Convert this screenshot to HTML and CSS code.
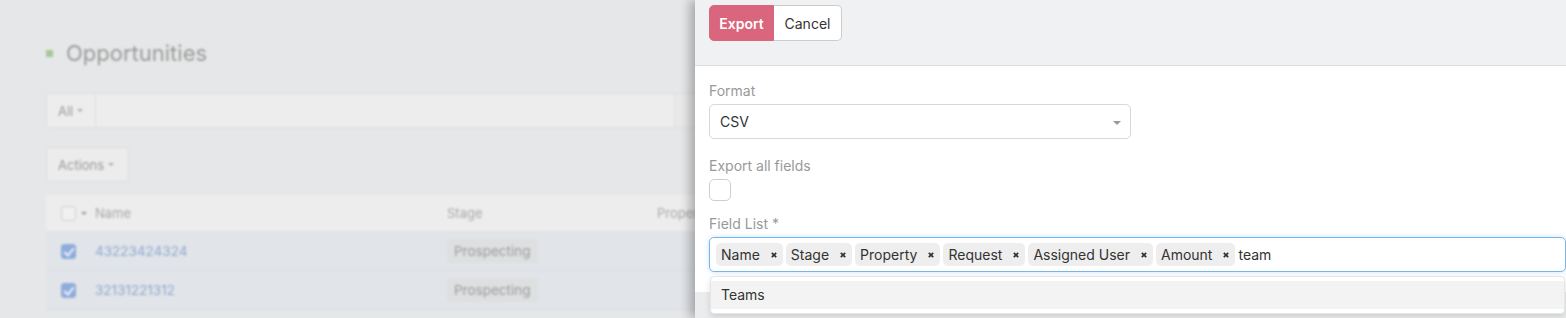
FILE: index.html
```html
<!DOCTYPE html>
<html>
<head>
<meta charset="utf-8">
<link rel="stylesheet" href="styles.css">
</head>
<body>
<div class="page">
  <div class="title"><span class="title-mark"></span>Opportunities</div>
  <div class="search">
    <div class="search-all">All<span class="caret"></span></div>
    <div class="search-input"></div>
    <div class="search-btn"></div>
  </div>
  <div class="actions">Actions<span class="caret"></span></div>
  <div class="table">
    <div class="row head">
      <div class="c-check"><span class="cb"></span><span class="caret dark"></span></div>
      <div class="c-name">Name</div>
      <div class="c-stage">Stage</div>
      <div class="c-prop">Property</div>
    </div>
    <div class="row sel">
      <div class="c-check"><span class="cb on"></span></div>
      <div class="c-name link">43223424324</div>
      <div class="c-stage"><span class="badge">Prospecting</span></div>
      <div class="c-prop"></div>
    </div>
    <div class="row sel">
      <div class="c-check"><span class="cb on"></span></div>
      <div class="c-name link">32131221312</div>
      <div class="c-stage"><span class="badge">Prospecting</span></div>
      <div class="c-prop"></div>
    </div>
  </div>
</div>

<div class="modal">
  <div class="modal-header">
    <div class="btn-group">
      <button class="btn btn-export">Export</button>
      <button class="btn btn-cancel">Cancel</button>
    </div>
  </div>
  <div class="modal-body">
    <div class="field">
      <div class="label">Format</div>
      <div class="select">CSV<span class="select-caret"></span></div>
    </div>
    <div class="field field-check">
      <div class="label">Export all fields</div>
      <div class="checkbox"></div>
    </div>
    <div class="field field-last">
      <div class="label">Field List *</div>
      <div class="multi">
        <span class="tag">Name<svg class="x" viewBox="0 0 6 6"><path d="M0.8 0.8L5.2 5.2M5.2 0.8L0.8 5.2"/></svg></span>
        <span class="tag">Stage<svg class="x" viewBox="0 0 6 6"><path d="M0.8 0.8L5.2 5.2M5.2 0.8L0.8 5.2"/></svg></span>
        <span class="tag">Property<svg class="x" viewBox="0 0 6 6"><path d="M0.8 0.8L5.2 5.2M5.2 0.8L0.8 5.2"/></svg></span>
        <span class="tag">Request<svg class="x" viewBox="0 0 6 6"><path d="M0.8 0.8L5.2 5.2M5.2 0.8L0.8 5.2"/></svg></span>
        <span class="tag">Assigned User<svg class="x" viewBox="0 0 6 6"><path d="M0.8 0.8L5.2 5.2M5.2 0.8L0.8 5.2"/></svg></span>
        <span class="tag">Amount<svg class="x" viewBox="0 0 6 6"><path d="M0.8 0.8L5.2 5.2M5.2 0.8L0.8 5.2"/></svg></span>
        <span class="typed">team</span>
        <div class="dropdown"><div class="option">Teams</div></div>
      </div>
    </div>
  </div>
</div>
</body>
</html>
```

FILE: styles.css
```css
html, body {
  margin: 0;
  padding: 0;
  width: 1566px;
  height: 318px;
  overflow: hidden;
  background: #e6e7e8;
  font-family: Inter, "Liberation Sans", sans-serif;
  font-size: 14px;
}

/* ---------- blurred background page ---------- */
.page {
  padding: 38px 0 0 46px;
  filter: blur(1.3px);
  color: #9a9a9a;
}
.title {
  display: flex;
  align-items: center;
  height: 30px;
  font-size: 22px;
  color: #9b9b9b;
}
.title-mark {
  width: 7px;
  height: 7px;
  background: #a9c79b;
  margin-right: 13px;
}
.caret {
  display: inline-block;
  width: 0;
  height: 0;
  border-left: 3px solid transparent;
  border-right: 3px solid transparent;
  border-top: 3px solid #aaa;
  margin-left: 4px;
  vertical-align: middle;
}
.caret.dark { border-top-color: #999; margin-left: 5px; }
.search {
  margin-top: 25px;
  display: flex;
  height: 35px;
  width: 660px;
}
.search-all {
  width: 50px;
  box-sizing: border-box;
  display: flex;
  align-items: center;
  padding-left: 11px;
  background: #ededed;
  border: 1px solid #dedede;
  border-radius: 4px 0 0 4px;
  font-size: 13px;
  color: #9a9a9a;
}
.search-input {
  flex: 1;
  background: #ededed;
  border: 1px solid #dedede;
  border-left: none;
}
.search-btn {
  width: 30px;
  background: #e9e9e9;
  border: 1px solid #dedede;
  border-left: none;
}
.actions {
  margin-top: 19px;
  width: 83px;
  height: 35px;
  box-sizing: border-box;
  display: flex;
  align-items: center;
  padding-left: 11px;
  background: #ececec;
  border: 1px solid #dcdcdc;
  border-radius: 4px;
  font-size: 13px;
  color: #999;
}
.table {
  margin-top: 13px;
  width: 1500px;
  background: #ededed;
}
.row {
  display: flex;
  align-items: center;
  height: 39px;
  border-bottom: 1px solid #e2e2e2;
  box-sizing: border-box;
}
.row.head {
  height: 37px;
  background: #ededed;
  border-radius: 4px 4px 0 0;
  color: #a9a9a9;
  font-size: 13px;
}
.row.sel {
  background: #e1e4e8;
  border-bottom-color: #dadde1;
}
.c-check {
  width: 49px;
  padding-left: 15px;
  box-sizing: border-box;
  display: flex;
  align-items: center;
}
.c-name { width: 352px; }
.c-stage { width: 210px; }
.c-prop { flex: 1; }
.cb {
  width: 13px;
  height: 13px;
  border: 1px solid #d2d2d2;
  border-radius: 3px;
  background: #f0f0f0;
}
.cb.on {
  background: #8eaddb;
  border-color: #8eaddb;
  position: relative;
}
.cb.on::after {
  content: "";
  position: absolute;
  left: 4px;
  top: 1px;
  width: 4px;
  height: 8px;
  border-right: 2px solid #eef;
  border-bottom: 2px solid #eef;
  transform: rotate(40deg);
}
.link { color: #8ea9d1; font-size: 13.5px; }
.badge {
  display: inline-block;
  background: #dedfe0;
  color: #9b9b9b;
  padding: 4px 7px;
  border-radius: 3px;
  font-size: 13.5px;
}

/* ---------- export side modal ---------- */
.modal {
  position: absolute;
  top: 0;
  left: 695px;
  bottom: 0;
  width: 885px;
  background: #ebecee;
  box-shadow: -5px 0 10px rgba(0, 0, 0, 0.28);
  color: #333;
}
.modal-header {
  height: 66px;
  box-sizing: border-box;
  padding: 5px 14px 0;
  background: #f0f1f3;
  border-bottom: 1px solid #dcdddf;
}
.btn-group { display: flex; }
.btn {
  height: 36px;
  font-family: inherit;
  font-size: 14px;
  border: 1px solid #ccc;
  margin: 0;
  cursor: pointer;
}
.btn-export {
  width: 65px;
  padding: 0;
  background: #d9667d;
  border-color: #d9667d;
  color: #fff;
  font-weight: 600;
  border-radius: 5px 0 0 5px;
}
.btn-cancel {
  width: 68px;
  padding: 0;
  background: #fff;
  border-left: none;
  color: #333;
  border-radius: 0 5px 5px 0;
}
.modal-body {
  background: #fff;
  padding: 15px 14px 20px;
}
.field { margin-bottom: 17px; }
.field-check { margin-bottom: 13px; }
.field-last { margin-bottom: 0; }
.label {
  line-height: 20px;
  height: 20px;
  margin-bottom: 3px;
  color: #999;
}
.select {
  width: 422px;
  height: 35px;
  box-sizing: border-box;
  border: 1px solid #d8d8d8;
  border-radius: 5px;
  display: flex;
  align-items: center;
  justify-content: space-between;
  padding: 0 9px 0 10px;
}
.select-caret {
  width: 0;
  height: 0;
  border-left: 4px solid transparent;
  border-right: 4px solid transparent;
  border-top: 4px solid #999;
  margin-top: 2px;
}
.checkbox {
  width: 22px;
  height: 22px;
  box-sizing: border-box;
  border: 1px solid #cfcfcf;
  border-radius: 5px;
}
.multi {
  position: relative;
  height: 35px;
  box-sizing: border-box;
  border: 1px solid #78b4ee;
  border-radius: 5px;
  box-shadow: 0 0 5px rgba(102, 175, 233, 0.35);
  padding: 5px 6px;
  display: flex;
  align-items: center;
  gap: 3px;
}
.tag {
  display: flex;
  align-items: center;
  height: 23px;
  padding: 0 6px 0 5px;
  background: #eeeeee;
  border-radius: 5px;
  white-space: nowrap;
}
.x {
  width: 6px;
  height: 6px;
  margin-left: 11px;
  stroke: #333;
  stroke-width: 1.7;
  fill: none;
}
.typed { margin-left: 0; }
.dropdown {
  position: absolute;
  left: 0;
  right: 0;
  top: calc(100% + 5px);
  background: #fff;
  border: 1px solid #e6e6e6;
  border-radius: 4px;
  box-shadow: 0 3px 6px rgba(0, 0, 0, 0.12);
  padding: 4px 0;
}
.option {
  height: 28px;
  line-height: 28px;
  padding-left: 10px;
  background: #f3f3f3;
}
```
